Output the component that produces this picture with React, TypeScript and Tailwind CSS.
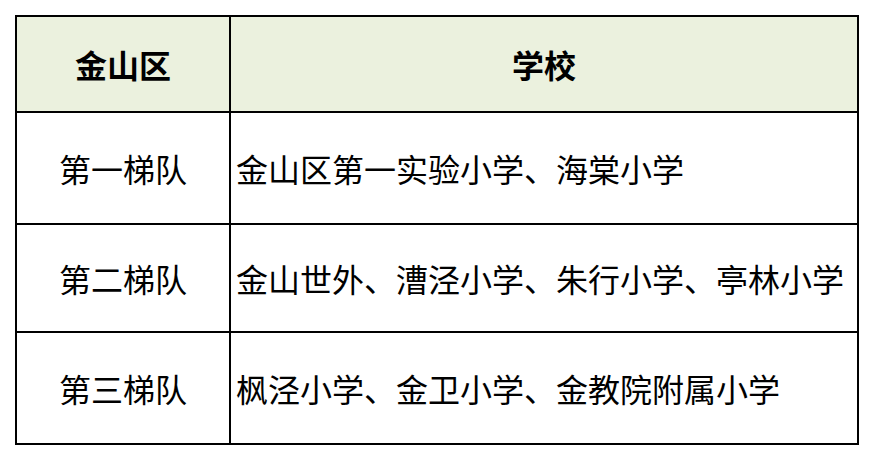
import React from "react"

const rows = [
  { tier: "第一梯队", schools: "金山区第一实验小学、海棠小学", h: "h-[112px]" },
  { tier: "第二梯队", schools: "金山世外、漕泾小学、朱行小学、亭林小学", h: "h-[108px]" },
  { tier: "第三梯队", schools: "枫泾小学、金卫小学、金教院附属小学", h: "h-[110px]" },
]

export default function App() {
  return (
    <div
      className="min-h-[460px] w-[874px] bg-white pl-[15px] pt-[15px] text-black"
      style={{ fontFamily: '"Noto Sans CJK SC", "Noto Sans", sans-serif' }}
    >
      <div className="w-[844px] border-2 border-black">
        <div className="grid h-[96px] grid-cols-[214px_1fr] border-b-2 border-black bg-[#ebf1de] text-[32px] font-bold">
          <div className="flex items-center justify-center border-r-2 border-black">金山区</div>
          <div className="flex items-center justify-center">学校</div>
        </div>
        {rows.map((r, i) => (
          <div
            key={r.tier}
            className={`grid grid-cols-[214px_1fr] text-[32px] ${r.h} ${i < rows.length - 1 ? "border-b-2 border-black" : ""}`}
          >
            <div className="flex items-center justify-center border-r-2 border-black">{r.tier}</div>
            <div className="flex items-center whitespace-nowrap pl-[5px]">{r.schools}</div>
          </div>
        ))}
      </div>
    </div>
  )
}
